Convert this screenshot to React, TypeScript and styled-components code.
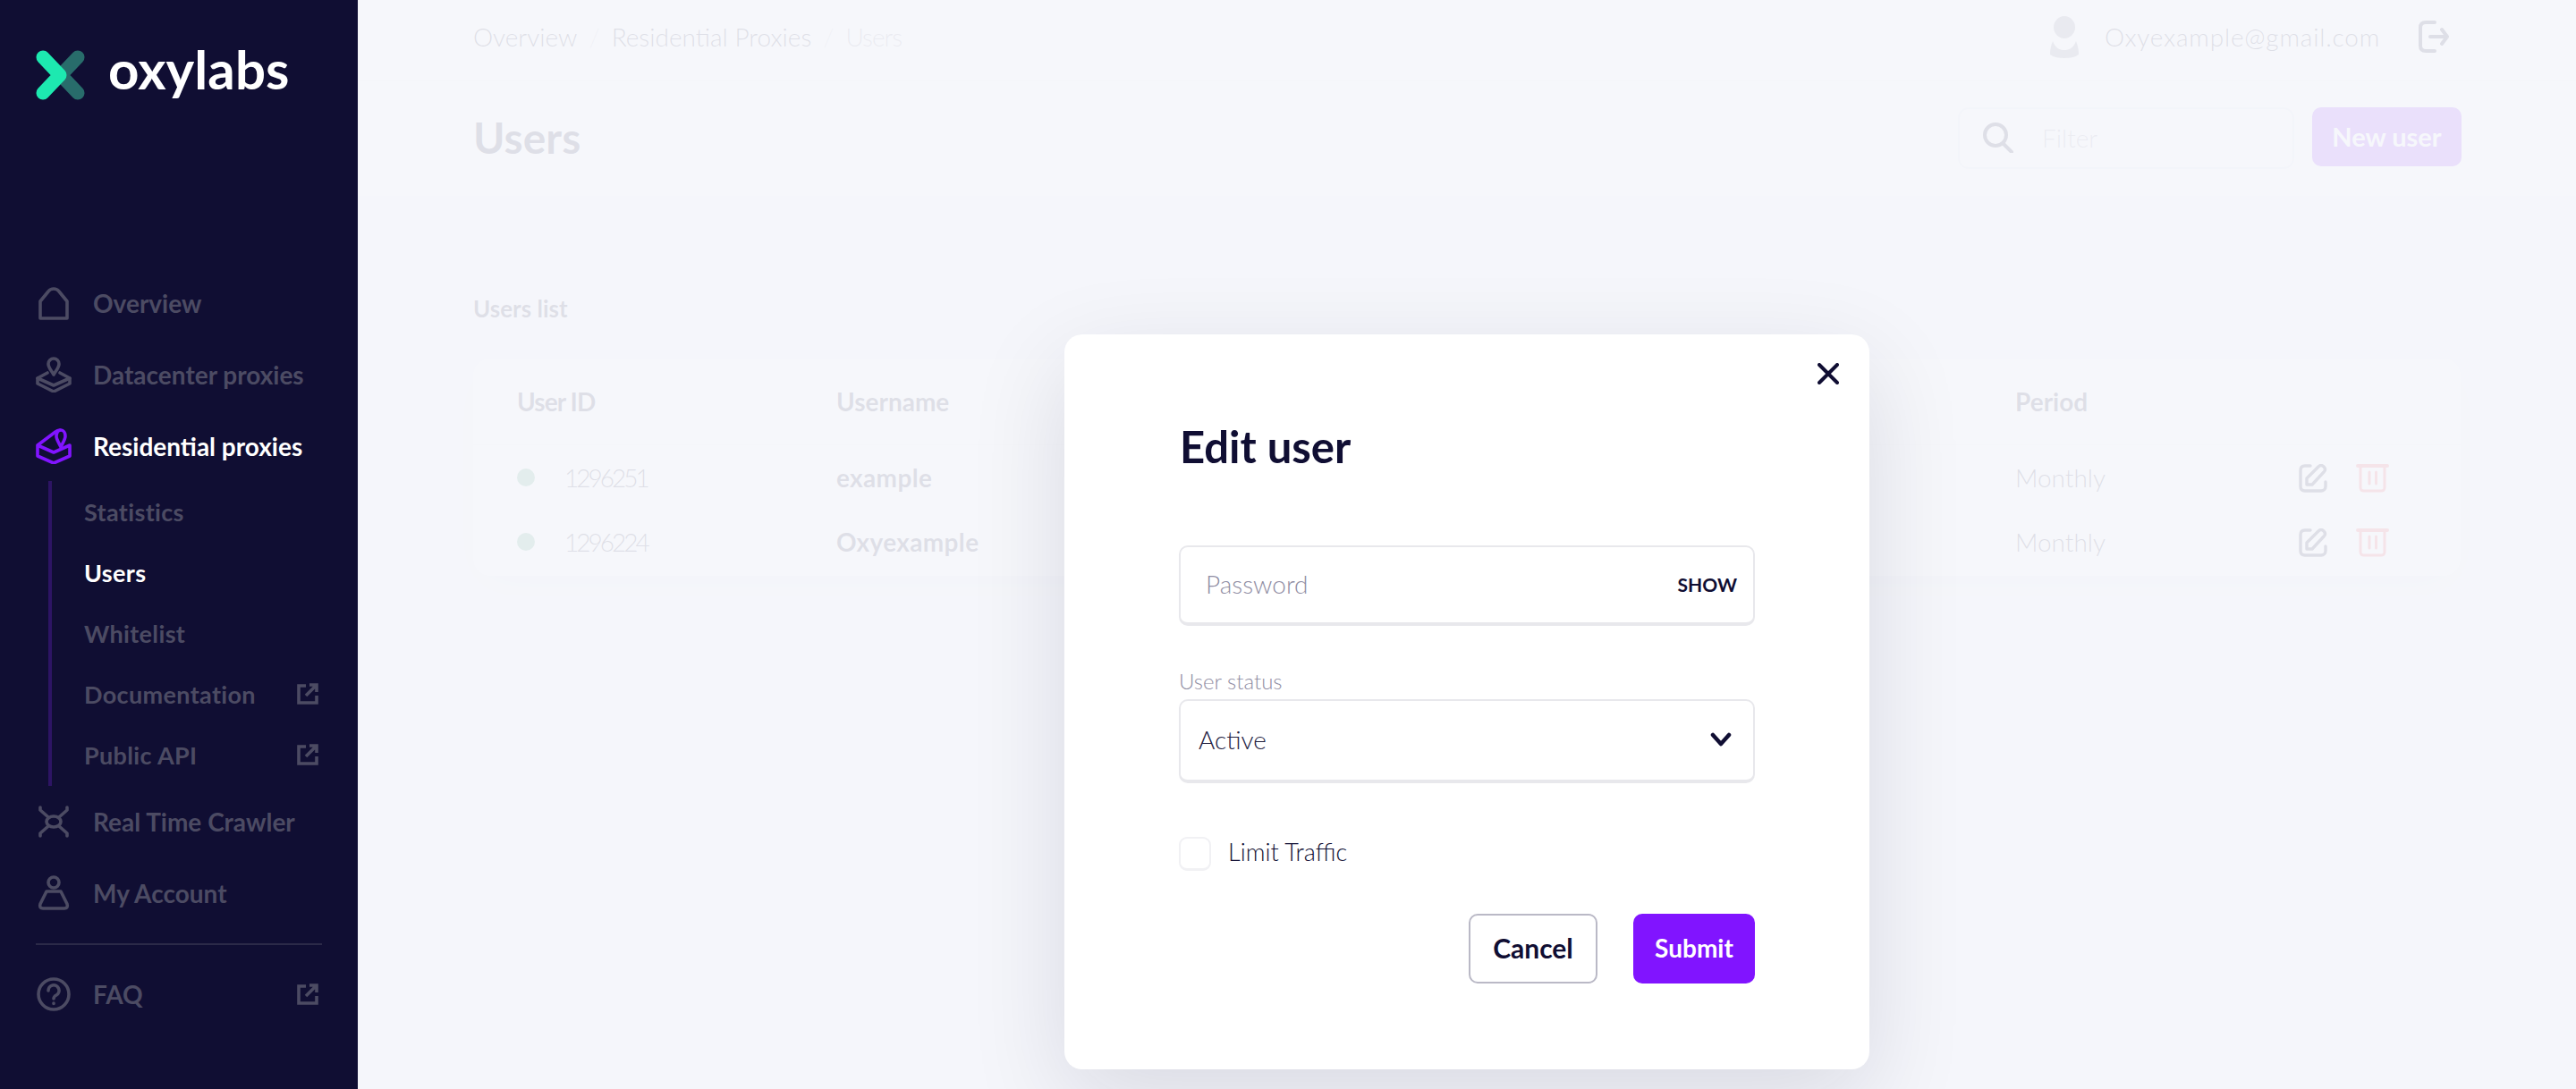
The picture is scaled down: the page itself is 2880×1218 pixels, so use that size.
import * as React from 'react';
import styled, { createGlobalStyle } from 'styled-components';

const ink = '#100e33';
const dim = '#4c4b63';
const purple = '#8114ff';
const fontStack = `Lato, "Liberation Sans", Arial, sans-serif`;

const GlobalStyle = createGlobalStyle`
  html, body {
    margin: 0;
    padding: 0;
    width: 2880px;
    height: 1218px;
    overflow: hidden;
    background: #f5f6fb;
    font-family: ${fontStack};
  }
  * {
    box-sizing: border-box;
  }
`;

const Layout = styled.div`
  display: flex;
  width: 2880px;
  height: 1218px;
`;

const Sidebar = styled.aside`
  width: 400px;
  flex: none;
  background: #100e33;
  display: flex;
  flex-direction: column;
`;

const Brand = styled.div`
  height: 299px;
  padding: 56px 0 0 40px;
  display: flex;
  align-items: flex-start;
  gap: 26px;
`;

const BrandName = styled.div`
  color: #fff;
  font-size: 60px;
  font-weight: 700;
  line-height: 42px;
  letter-spacing: 0.1px;
`;

const NavRow = styled.div<{ $active?: boolean }>`
  height: 80px;
  padding: 0 44px 0 40px;
  display: flex;
  align-items: center;
  color: ${(p) => (p.$active ? '#fff' : dim)};
  font-size: 28px;
  font-weight: 700;
`;

const NavIcon = styled.svg`
  width: 40px;
  height: 40px;
  margin-right: 24px;
  flex: none;
  fill: none;
  stroke: currentColor;
  stroke-width: 3.6;
  stroke-linecap: round;
  stroke-linejoin: round;
`;

const NavLabel = styled.span`
  flex: 1;
`;

const SubNav = styled.div`
  margin: -1px 0 0 54px;
  height: 341px;
  border-left: 4px solid #2d1464;
`;

const SubRow = styled.div<{ $active?: boolean }>`
  height: 68px;
  padding: 0 44px 0 36px;
  display: flex;
  align-items: center;
  color: ${(p) => (p.$active ? '#fff' : dim)};
  font-size: 27px;
  font-weight: 700;
  letter-spacing: 0.35px;
`;

const ExternalIcon = styled.svg`
  width: 24px;
  height: 24px;
  flex: none;
  fill: none;
  stroke: ${dim};
  stroke-width: 3.6;
`;

const NavDivider = styled.div`
  height: 2px;
  margin: 16px 40px 15px;
  background: #2b2a48;
`;

const Main = styled.main`
  position: relative;
  flex: 1;
  overflow: hidden;
  display: flex;
  flex-direction: column;
  color: ${ink};
`;

const TopBar = styled.div`
  height: 90px;
  padding: 0 142px 8px 129px;
  background: #fff;
  display: flex;
  align-items: center;
  font-size: 28px;
`;

const Crumb = styled.span`
  font-weight: 300;
`;

const CrumbCurrent = styled(Crumb)`
  opacity: 0.5;
  letter-spacing: -1px;
`;

const CrumbSlash = styled.span`
  margin: 0 13px;
  opacity: 0.25;
  font-weight: 300;
`;

const Account = styled.div`
  margin-left: auto;
  display: flex;
  align-items: center;
`;

const Email = styled.span`
  margin: 0 43px 0 29px;
  font-weight: 300;
  letter-spacing: 0.8px;
`;

const HeadBar = styled.div`
  height: 129px;
  padding: 0 128px 4px 129px;
  background: #fff;
  border-top: 1px solid #eef0f6;
  display: flex;
  align-items: center;
`;

const PageTitle = styled.h1`
  margin: 0;
  font-size: 48px;
  font-weight: 700;
  flex: 1;
`;

const FilterBox = styled.div`
  width: 376px;
  height: 69px;
  margin-top: 2px;
  padding-left: 26px;
  border: 2px solid #e2e4ef;
  border-radius: 12px;
  display: flex;
  align-items: center;
  gap: 32px;
  font-size: 28px;
  font-weight: 300;
  color: #8f8da3;
`;

const PrimaryButton = styled.button`
  border: 0;
  padding: 0 0 2px;
  border-radius: 10px;
  background: ${purple};
  color: #fff;
  font: 700 28px ${fontStack};
`;

const NewUserButton = styled(PrimaryButton)`
  width: 167px;
  height: 66px;
  margin-left: 20px;
  font-size: 29px;
`;

const Content = styled.div`
  padding: 107px 128px 0 129px;
`;

const SectionTitle = styled.h2`
  margin: 0 0 37px;
  font-size: 26px;
  line-height: 38px;
  font-weight: 700;
`;

const Card = styled.div`
  width: 2222px;
  height: 243px;
  background: #fff;
  border-radius: 20px;
  box-shadow: 0 12px 50px rgba(16, 14, 51, 0.07);
`;

const TableRow = styled.div<{ $head?: boolean }>`
  display: grid;
  grid-template-columns: 357px 1318px 317px 1fr;
  align-items: center;
  padding-left: 49px;
  height: ${(p) => (p.$head ? '97px' : '72px')};
  font-size: 28px;
  font-weight: ${(p) => (p.$head ? 700 : 300)};
  border-bottom: ${(p) => (p.$head ? '1px solid #e8eaf1' : '0')};
`;

const UserIdHead = styled.div`
  letter-spacing: -0.9px;
`;

const IdCell = styled.div`
  display: flex;
  align-items: center;
  gap: 33px;
  letter-spacing: -3px;
`;

const StatusDot = styled.i`
  width: 20px;
  height: 20px;
  border-radius: 50%;
  background: #3f9a70;
`;

const Username = styled.div`
  font-weight: 700;
  letter-spacing: 0.35px;
`;

const Actions = styled.div`
  display: flex;
  gap: 32px;
  padding-top: 2px;
`;

const LineIcon = styled.svg<{ $danger?: boolean }>`
  width: ${(p) => (p.$danger ? '37px' : '32px')};
  height: 32px;
  fill: none;
  stroke: ${(p) => (p.$danger ? '#f33c4e' : ink)};
  stroke-width: 3.4;
  stroke-linecap: round;
  stroke-linejoin: round;
`;

const Overlay = styled.div`
  position: absolute;
  inset: 0;
  padding-top: 374px;
  background: rgba(245, 246, 251, 0.9);
  display: flex;
  justify-content: center;
  align-items: flex-start;
`;

const Modal = styled.div`
  position: relative;
  width: 900px;
  height: 822px;
  padding: 96px 128px 0 130px;
  background: #fff;
  border-radius: 20px;
  box-shadow: 0 34px 110px rgba(16, 14, 51, 0.12);
  color: ${ink};
`;

const CloseButton = styled.svg`
  position: absolute;
  top: 32px;
  right: 34px;
  width: 24px;
  height: 24px;
  stroke: ${ink};
  stroke-width: 4;
  stroke-linecap: round;
`;

const ModalTitle = styled.h3`
  margin: 0 0 82px -1px;
  font-size: 49px;
  line-height: 58px;
  font-weight: 700;
`;

const Field = styled.div`
  width: 644px;
  height: 90px;
  margin-left: -2px;
  border: 2px solid #e8e8ec;
  border-bottom-width: 4px;
  border-radius: 10px;
  display: flex;
  align-items: center;
`;

const Password = styled(Field)`
  padding: 0 18px 2px 28px;
  justify-content: space-between;
  color: #8f8da3;
  font-size: 28px;
  font-weight: 300;
`;

const ShowLabel = styled.span`
  color: ${ink};
  font-size: 21px;
  font-weight: 700;
`;

const FieldLabel = styled.div`
  margin: 46px 0 5px -2px;
  color: #8f8da3;
  font-size: 24px;
  line-height: 31px;
  font-weight: 300;
`;

const Select = styled(Field)`
  height: 94px;
  padding: 0 24px 2px 20px;
  justify-content: space-between;
  color: #22203f;
  font-size: 28px;
  font-weight: 300;
`;

const Chevron = styled.svg`
  width: 24px;
  height: 16px;
  fill: none;
  stroke: ${ink};
  stroke-width: 4.5;
  stroke-linecap: round;
  stroke-linejoin: round;
`;

const CheckRow = styled.label`
  margin: 60px 0 0 -2px;
  display: flex;
  align-items: center;
  gap: 19px;
  font-size: 27px;
  font-weight: 300;
  line-height: 36px;
`;

const CheckText = styled.span`
  margin-top: -4px;
`;

const CheckBox = styled.span`
  width: 36px;
  height: 38px;
  border: 2px solid #f1f1f4;
  border-bottom-width: 3px;
  border-radius: 9px;
`;

const ModalActions = styled.div`
  margin: 48px 0 0 0;
  width: 642px;
  display: flex;
  justify-content: flex-end;
  gap: 40px;
`;

const CancelButton = styled.button`
  width: 144px;
  height: 78px;
  padding: 0 0 2px;
  background: #fff;
  border: 2px solid #bab9c6;
  border-radius: 10px;
  color: ${ink};
  font: 700 30px ${fontStack};
`;

const SubmitButton = styled(PrimaryButton)`
  width: 136px;
  height: 78px;
`;

const External = () => (
  <ExternalIcon viewBox="0 0 24 24">
    <path d="M10 3H2v19h20v-8M14 2h8v8M21 3 10 14" />
  </ExternalIcon>
);

const icons: Record<string, React.ReactNode> = {
  home: <path d="M5 37h30V18L26 7c-3-4-9-4-12 0L5 18z" />,
  datacenter: (
    <>
      <path d="M14 8a6 6 0 0 1 12 0c0 4-3 7-6 12-3-5-6-8-6-12z" />
      <path d="M13 18 2 24v6l18 9 18-9v-6l-11-6" />
      <path d="m2 24 18 8 18-8" />
    </>
  ),
  residential: (
    <>
      <path d="M2 19v12l18 8 18-8V19L20 27 2 19l20-15c2-2 4-2 5-2" />
      <path d="M23 9c0-4 2-7 5-7s5 3 5 7c0 3-2 6-5 12-3-6-5-9-5-12z" />
    </>
  ),
  crawler: (
    <>
      <ellipse cx="20" cy="20" rx="8" ry="6" />
      <path d="M5 4v3l9 8M35 4v3l-9 8M5 36v-3l9-8M35 36v-3l-9-8" />
    </>
  ),
  account: (
    <>
      <circle cx="20" cy="8" r="6" />
      <path d="M12 18h16l7 14c1 3 0 5-3 5H8c-3 0-4-2-3-5z" />
    </>
  ),
  faq: (
    <>
      <circle cx="20" cy="20" r="17" />
      <path d="M14 16a6 6 0 1 1 9 5c-2 1-3 2-3 4M20 30v.5" />
    </>
  ),
};

const Icon = ({ name }: { name: string }) => <NavIcon viewBox="0 0 40 40">{icons[name]}</NavIcon>;

const subItems = [
  { label: 'Statistics' },
  { label: 'Users', active: true },
  { label: 'Whitelist' },
  { label: 'Documentation', external: true },
  { label: 'Public API', external: true },
];

const users = [
  { id: '1296251', name: 'example' },
  { id: '1296224', name: 'Oxyexample' },
];

export default function App() {
  return (
    <Layout>
      <GlobalStyle />
      <Sidebar>
        <Brand>
          <svg width="55" height="56" viewBox="0 0 55 56" fill="none" strokeWidth="15" strokeLinecap="round" strokeLinejoin="round">
            <path d="M47 8 28 28l19 20" stroke="#286c6b" />
            <path d="m8 8 19 20L8 48" stroke="#1de9b0" />
          </svg>
          <BrandName>oxylabs</BrandName>
        </Brand>
        <NavRow><Icon name="home" /><NavLabel>Overview</NavLabel></NavRow>
        <NavRow><Icon name="datacenter" /><NavLabel>Datacenter proxies</NavLabel></NavRow>
        <NavRow $active>
          <NavIcon viewBox="0 0 40 40" style={{ color: purple }}>{icons.residential}</NavIcon>
          <NavLabel>Residential proxies</NavLabel>
        </NavRow>
        <SubNav>
          {subItems.map((item) => (
            <SubRow key={item.label} $active={item.active}>
              <NavLabel>{item.label}</NavLabel>
              {item.external && <External />}
            </SubRow>
          ))}
        </SubNav>
        <NavRow><Icon name="crawler" /><NavLabel>Real Time Crawler</NavLabel></NavRow>
        <NavRow><Icon name="account" /><NavLabel>My Account</NavLabel></NavRow>
        <NavDivider />
        <NavRow><Icon name="faq" /><NavLabel>FAQ</NavLabel><External /></NavRow>
      </Sidebar>
      <Main>
        <TopBar>
          <Crumb>Overview</Crumb>
          <CrumbSlash>/</CrumbSlash>
          <Crumb>Residential Proxies</Crumb>
          <CrumbSlash>/</CrumbSlash>
          <CrumbCurrent>Users</CrumbCurrent>
          <Account>
            <svg width="32" height="47" viewBox="0 0 32 47" fill={ink} opacity="0.55">
              <ellipse cx="16" cy="12.5" rx="12" ry="12.5" />
              <path d="M3 22c3 8 8 10 13 10s10-2 13-10c2 5 3 9 3 15-4 3-10 4-16 4S4 40 0 37c0-6 1-10 3-15z" transform="translate(0 6)" />
            </svg>
            <Email>Oxyexample@gmail.com</Email>
            <svg width="34" height="36" viewBox="0 0 34 36" fill="none" stroke={ink} strokeWidth="4" strokeLinecap="round" strokeLinejoin="round">
              <path d="M18 2H8C4 2 2 4 2 8v20c0 4 2 6 6 6h10M13 18h19M26 10l6 8-6 8" />
            </svg>
          </Account>
        </TopBar>
        <HeadBar>
          <PageTitle>Users</PageTitle>
          <FilterBox>
            <svg width="34" height="34" viewBox="0 0 34 34" fill="none" stroke={ink} strokeWidth="4" strokeLinecap="round">
              <circle cx="14" cy="14" r="12" />
              <path d="m23 24 9 9" />
            </svg>
            Filter
          </FilterBox>
          <NewUserButton>New user</NewUserButton>
        </HeadBar>
        <Content>
          <SectionTitle>Users list</SectionTitle>
          <Card>
            <TableRow $head>
              <UserIdHead>User ID</UserIdHead>
              <div>Username</div>
              <div>Period</div>
            </TableRow>
            {users.map((user) => (
              <TableRow key={user.id}>
                <IdCell><StatusDot />{user.id}</IdCell>
                <Username>{user.name}</Username>
                <div>Monthly</div>
                <Actions>
                  <LineIcon viewBox="0 0 32 32">
                    <path d="M13 2H7C3 2 2 4 2 7v18c0 3 1 5 5 5h18c3 0 5-2 5-5v-5" />
                    <path d="M9 23v-7L22 3c2-2 4-2 6 0s2 4 0 6L15 23z" />
                  </LineIcon>
                  <LineIcon $danger viewBox="0 0 37 32">
                    <path d="M2 2h33" strokeWidth="4" />
                    <path d="M5 2v24c0 3 1 4 4 4h19c3 0 4-1 4-4V2M15 9v13M22.5 9v13" strokeWidth="3" />
                  </LineIcon>
                </Actions>
              </TableRow>
            ))}
          </Card>
        </Content>
        <Overlay>
          <Modal>
            <CloseButton viewBox="0 0 24 24">
              <path d="m2 2 20 20M22 2 2 22" />
            </CloseButton>
            <ModalTitle>Edit user</ModalTitle>
            <Password>
              Password
              <ShowLabel>SHOW</ShowLabel>
            </Password>
            <FieldLabel>User status</FieldLabel>
            <Select>
              Active
              <Chevron viewBox="0 0 24 16">
                <path d="m3 3 9 10 9-10" />
              </Chevron>
            </Select>
            <CheckRow>
              <CheckBox />
              <CheckText>Limit Traffic</CheckText>
            </CheckRow>
            <ModalActions>
              <CancelButton>Cancel</CancelButton>
              <SubmitButton>Submit</SubmitButton>
            </ModalActions>
          </Modal>
        </Overlay>
      </Main>
    </Layout>
  );
}
